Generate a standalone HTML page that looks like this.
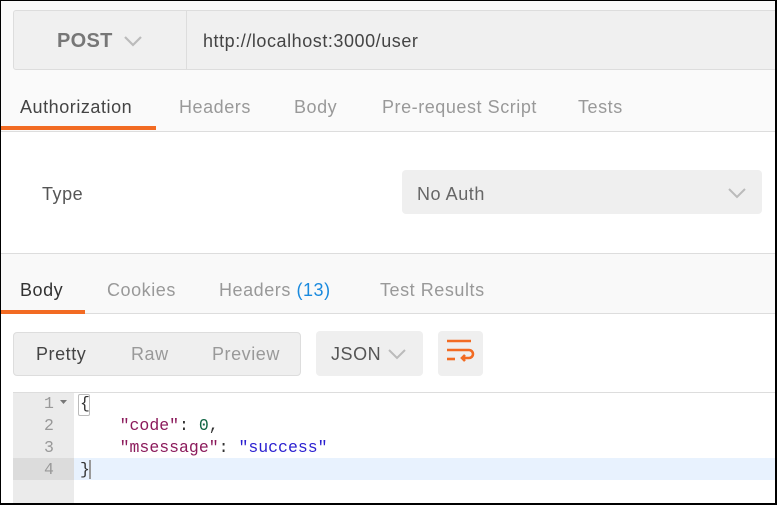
<!DOCTYPE html>
<html><head><style>
*{margin:0;padding:0;box-sizing:border-box}
body{width:777px;height:505px;overflow:hidden;background:#fff;font-family:"Liberation Sans",sans-serif;position:relative}
.frame{position:absolute;left:0;top:0;width:777px;height:505px;border-top:1px solid #000;border-left:1px solid #000;border-right:2px solid #000;border-bottom:2px solid #000;pointer-events:none;z-index:10}
.a{position:absolute}
.t{position:absolute;font-size:18px;color:#999;white-space:nowrap;letter-spacing:0.55px}
.mono{font-family:"Liberation Mono","DejaVu Sans Mono",monospace;font-size:16.5px;position:absolute;white-space:pre}
</style></head><body>
<div class="a" style="left:0;top:0;width:777px;height:132px;background:#fafafa"></div>
<div class="a" style="left:13px;top:10px;width:770px;height:60px;background:#f0f0f0;border:1px solid #ddd;border-radius:3px"></div>
<div class="a" style="left:186px;top:11px;width:1px;height:58px;background:#ddd"></div>
<div class="t" style="left:57px;top:30px;font-size:20px;color:#777;font-weight:bold;letter-spacing:0.3px">POST</div>
<svg class="a" style="left:123px;top:34px" width="20" height="14"><path d="M2 3 L10 11 L18 3" stroke="#bbb" stroke-width="2.2" fill="none"/></svg>
<div class="t" style="left:203px;top:31px;color:#444">http://localhost:3000/user</div>
<div class="t" style="left:20px;top:97px;color:#444">Authorization</div>
<div class="t" style="left:179px;top:97px">Headers</div>
<div class="t" style="left:294px;top:97px">Body</div>
<div class="t" style="left:382px;top:97px">Pre-request Script</div>
<div class="t" style="left:578px;top:97px">Tests</div>
<div class="a" style="left:0;top:126px;width:156px;height:4px;background:#f26b23"></div>
<div class="a" style="left:0;top:131px;width:777px;height:1px;background:#ddd"></div>
<div class="t" style="left:42px;top:184px;color:#555">Type</div>
<div class="a" style="left:402px;top:170px;width:360px;height:44px;background:#efefef;border-radius:4px"></div>
<div class="t" style="left:417px;top:184px;color:#666">No Auth</div>
<svg class="a" style="left:727px;top:186px" width="20" height="14"><path d="M2 3 L10 11 L18 3" stroke="#bbb" stroke-width="2" fill="none"/></svg>
<div class="a" style="left:0;top:253px;width:777px;height:61px;background:#f9f9f9;border-top:1px solid #ddd;border-bottom:1px solid #ddd"></div>
<div class="t" style="left:20px;top:280px;color:#333">Body</div>
<div class="t" style="left:107px;top:280px">Cookies</div>
<div class="t" style="left:219px;top:280px">Headers <span style="color:#1a8ade">(13)</span></div>
<div class="t" style="left:380px;top:280px">Test Results</div>
<div class="a" style="left:0;top:310px;width:85px;height:4px;background:#f26b23"></div>
<div class="a" style="left:13px;top:332px;width:288px;height:44px;background:#efefef;border:1px solid #ddd;border-radius:4px"></div>
<div class="t" style="left:36px;top:344px;color:#444">Pretty</div>
<div class="t" style="left:131px;top:344px">Raw</div>
<div class="t" style="left:212px;top:344px">Preview</div>
<div class="a" style="left:316px;top:331px;width:107px;height:45px;background:#efefef;border-radius:4px"></div>
<div class="t" style="left:331px;top:344px;color:#555">JSON</div>
<svg class="a" style="left:387px;top:347px" width="20" height="14"><path d="M2 3 L10 11 L18 3" stroke="#bbb" stroke-width="2" fill="none"/></svg>
<div class="a" style="left:438px;top:331px;width:45px;height:45px;background:#efefef;border-radius:4px"></div>
<svg class="a" style="left:438px;top:331px" width="45" height="45"><g stroke="#f26b23" stroke-width="2.6" fill="none"><path d="M9 10 H33"/><path d="M9 19 H31 a4 4 0 0 1 0 8 H24"/><path d="M27 24 L24 27 L27 30"/><path d="M9 28 H17"/></g></svg>
<div class="a" style="left:13px;top:392px;width:764px;height:1px;background:#ddd"></div>
<div class="a" style="left:13px;top:393px;width:61px;height:112px;background:#ebebeb"></div>
<div class="a" style="left:74px;top:458px;width:703px;height:22px;background:#e8f2fe"></div>
<div class="a" style="left:13px;top:458px;width:61px;height:22px;background:#dcdcdc"></div>
<div class="mono" style="left:44px;top:393px;color:#999;line-height:22px">1
2
3
4</div>
<svg class="a" style="left:60px;top:400px" width="8" height="6"><path d="M0 0 H7 L3.5 4Z" fill="#777"/></svg>
<div class="a" style="left:78px;top:394px;width:12px;height:22px;border:1px solid #bbb;border-radius:2px"></div>
<div class="a" style="left:89px;top:460px;width:2px;height:19px;background:#999"></div>
<div class="mono" style="left:80px;top:393px;line-height:22px;color:#333">{
    <span style="color:#8b1a5b">"code"</span>: <span style="color:#164">0</span>,
    <span style="color:#8b1a5b">"msessage"</span>: <span style="color:#2a1fd0">"success"</span>
}</div>
<div class="frame"></div>
</body></html>
